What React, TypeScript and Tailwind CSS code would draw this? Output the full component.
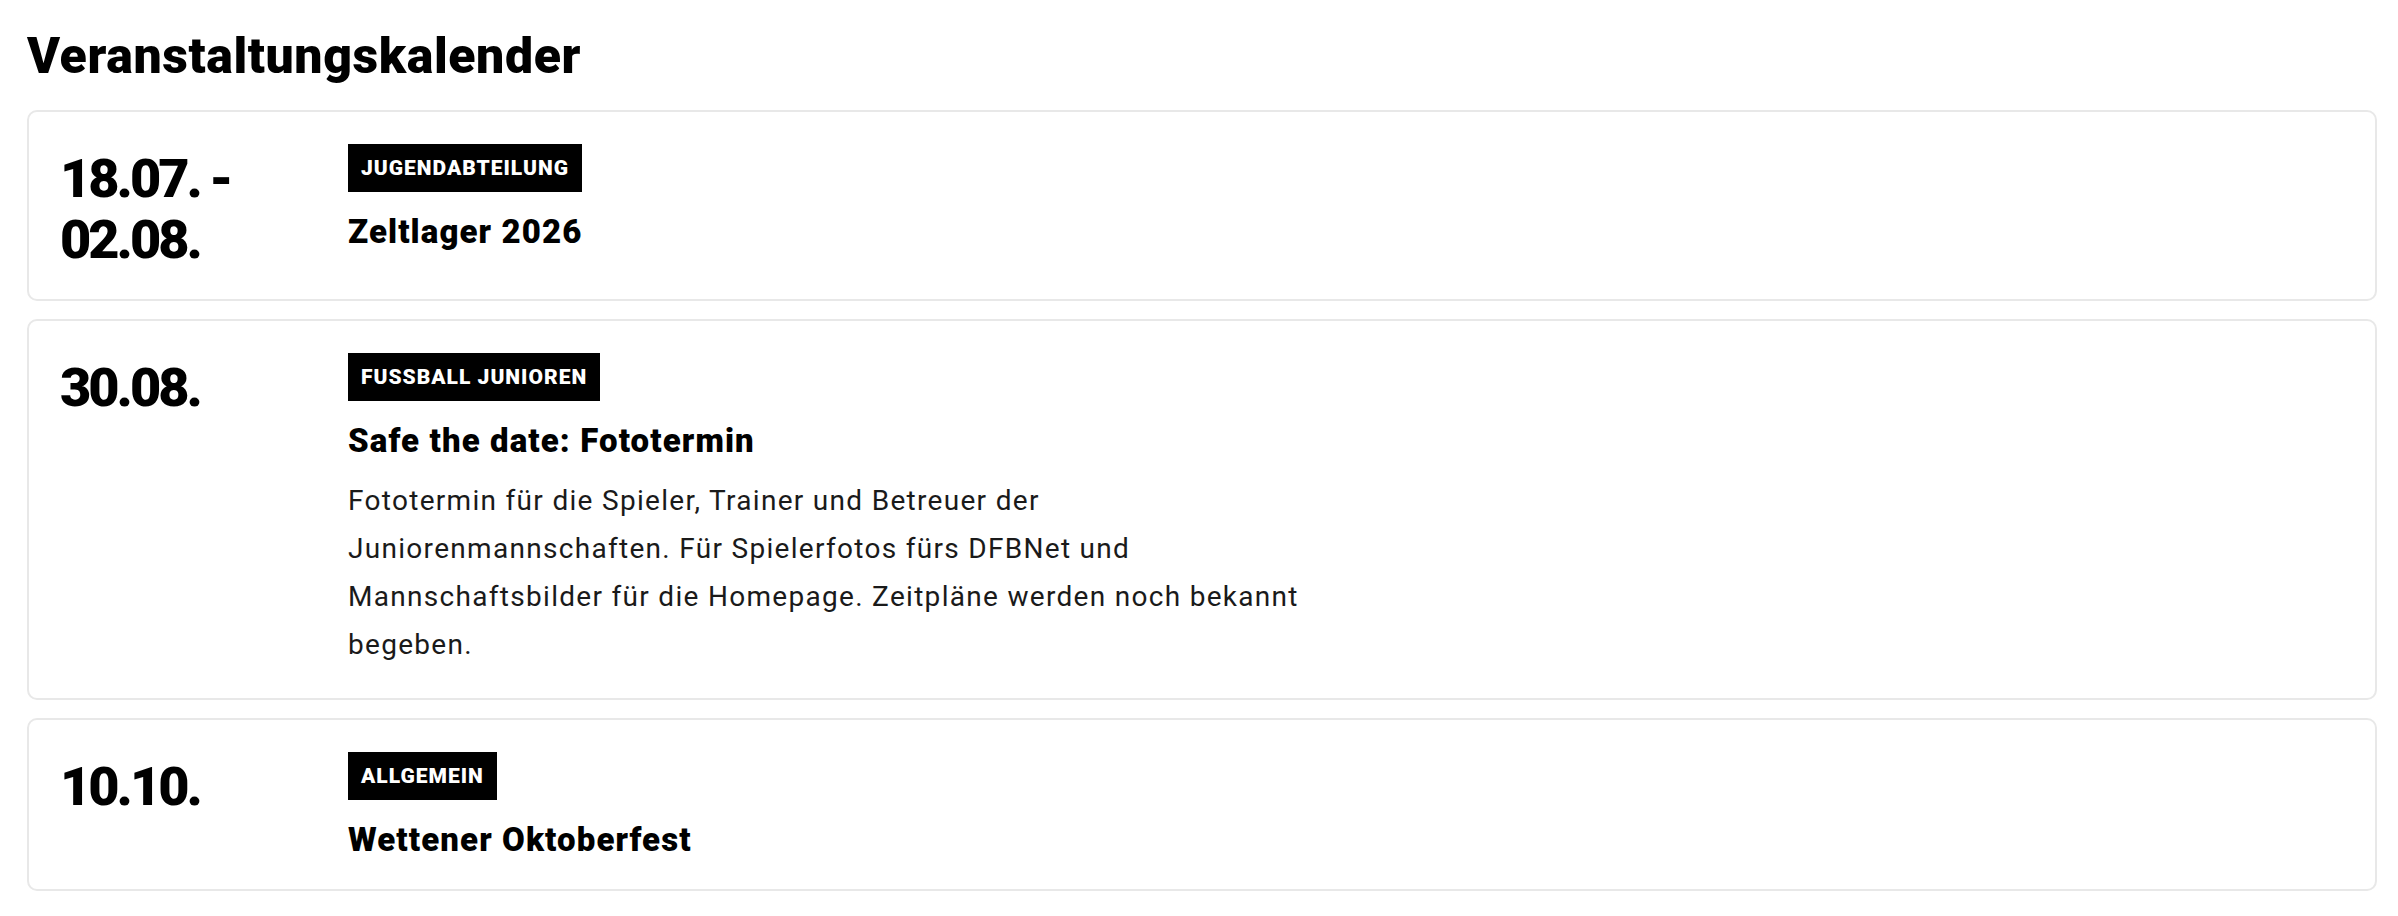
import React from "react";

type EventItem = {
    id: string;
    date: string[];
    category: string;
    title: string;
    text?: string;
};

const events: EventItem[] = [
    { id: "zeltlager", date: ["18.07. -", "02.08."], category: "Jugendabteilung", title: "Zeltlager 2026" },
    {
        id: "fototermin",
        date: ["30.08."],
        category: "Fussball Junioren",
        title: "Safe the date: Fototermin",
        text: "Fototermin für die Spieler, Trainer und Betreuer der Juniorenmannschaften. Für Spielerfotos fürs DFBNet und Mannschaftsbilder für die Homepage. Zeitpläne werden noch bekannt begeben.",
    },
    { id: "oktoberfest", date: ["10.10."], category: "Allgemein", title: "Wettener Oktoberfest" },
];

function EventCard({ item }: { item: EventItem }) {
    return (
        <div className="flex border-2 border-[#e8e8e8] rounded-[10px] bg-white pl-[31px] pr-8 pt-8 pb-[29px]">
            <div className="w-[288px] shrink-0 pt-1 text-[54px] leading-[61px] font-black tracking-[-3px] [word-spacing:-1px] text-black">
                {item.date.map((line) => (
                    <div key={line}>{line}</div>
                ))}
            </div>
            <div className="flex flex-col items-start">
                <span className="bg-black text-white uppercase font-black text-[21px] leading-6 tracking-[1px] px-[13px] py-3">
                    {item.category}
                </span>
                <h3 className="mt-5 text-[33px] leading-10 font-black tracking-[1.1px] text-black">{item.title}</h3>
                {item.text && (
                    <p className="mt-4 max-w-[990px] text-[28px] leading-[48px] tracking-[1.3px] text-[#1a1a1a]">
                        {item.text}
                    </p>
                )}
            </div>
        </div>
    );
}

export default function App() {
    return (
        <div className="min-h-screen bg-white font-['Roboto','Noto_Sans',sans-serif] pl-[27px] pr-[21px] pt-[26px]">
            <h1 className="text-[50px] leading-[60px] font-black tracking-[0.6px] text-black mb-6">Veranstaltungskalender</h1>
            <div className="flex flex-col gap-[18px]">
                {events.map((item) => (
                    <EventCard key={item.id} item={item} />
                ))}
            </div>
        </div>
    );
}
